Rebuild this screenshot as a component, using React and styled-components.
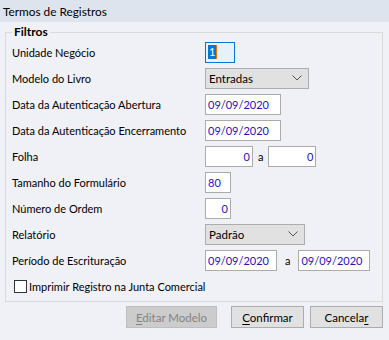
import React from 'react'
import styled, { createGlobalStyle } from 'styled-components'

const Global = createGlobalStyle`
  html, body {
    margin: 0;
    padding: 0;
    background: #f0f0f7;
  }
`

const Window = styled.div`
  width: 389px;
  height: 340px;
  background: #f0f0f7;
  font-family: Lato, "Liberation Sans", sans-serif;
  font-size: 11px;
  color: #000;
  display: flex;
  flex-direction: column;
  overflow: hidden;
`

const TitleBar = styled.div`
  height: 22px;
  flex: none;
  background: #dde4ee;
  padding-left: 3px;
  display: flex;
  align-items: center;
  font-size: 11.8px;
`

const Body = styled.div`
  padding: 3px 6px 0 5px;
  display: flex;
  flex-direction: column;
`

const Group = styled.fieldset`
  margin: 0;
  border: 1px solid #dadada;
  padding: 0 0 2px 6px;
  min-width: 0;
`

const Legend = styled.legend`
  font-weight: bold;
  font-size: 12px;
  padding: 0 2px;
  margin-left: 0;
  line-height: 14px;
`

const Grid = styled.div`
  display: grid;
  grid-template-columns: 193px auto;
  grid-auto-rows: 26px;
  align-items: center;
`

const Label = styled.div`
  white-space: nowrap;
`

const Field = styled.div`
  display: flex;
  align-items: center;
  gap: ${({ $gap }) => $gap || 0}px;
`

const Input = styled.div`
  box-sizing: border-box;
  width: ${({ $w }) => $w}px;
  height: 21px;
  background: #fff;
  border: 1px solid #ababab;
  color: #2a10c0;
  display: flex;
  align-items: center;
  justify-content: ${({ $right }) => ($right ? 'flex-end' : 'flex-start')};
  padding: 0 2px 0 2px;
  white-space: nowrap;
`

const FocusInput = styled(Input)`
  border-color: #0078d7;
  background: #e5f1fb;
`

const Selected = styled.span`
  background: #0078d7;
  color: #fff;
  line-height: 14px;
  padding: 0 1px;
`

const Caret = styled.span`
  display: inline-block;
  width: 1px;
  height: 14px;
  background: #f07000;
`

const Combo = styled.div`
  box-sizing: border-box;
  width: ${({ $w }) => $w}px;
  height: 21px;
  background: #e1e1e1;
  border: 1px solid #adadad;
  display: flex;
  align-items: center;
  justify-content: space-between;
  padding: 0 6px 0 3px;
  font-size: 11.5px;
`

const Sep = styled.span``

const CheckRow = styled.label`
  grid-column: 1 / span 2;
  display: flex;
  align-items: center;
  gap: 2px;
  padding-left: 2px;
  white-space: nowrap;
`

const Box = styled.span`
  box-sizing: border-box;
  width: 13px;
  height: 13px;
  border: 1px solid #333;
  background: #fff;
`

const Buttons = styled.div`
  display: flex;
  justify-content: flex-end;
  margin-top: 4px;
  gap: 6px;
`

const Button = styled.div`
  box-sizing: border-box;
  width: ${({ $w }) => $w}px;
  height: 22px;
  background: ${({ $disabled }) => ($disabled ? '#cccccc' : '#e1e1e1')};
  border: 1px solid ${({ $disabled }) => ($disabled ? '#bfbfbf' : '#adadad')};
  color: ${({ $disabled }) => ($disabled ? '#838383' : '#000')};
  display: flex;
  align-items: center;
  justify-content: center;
  font-size: 11.5px;
  margin-right: ${({ $mr }) => $mr || 0}px;

  u {
    text-decoration-thickness: 1px;
    text-underline-offset: 2px;
  }
`

const Chevron = () => (
  <svg width="10" height="6" viewBox="0 0 10 6">
    <path d="M0.5 0.5 L5 5 L9.5 0.5" fill="none" stroke="#555" strokeWidth="1" />
  </svg>
)

const App = () => (
  <Window>
    <Global />
    <TitleBar>Termos de Registros</TitleBar>
    <Body>
      <Group>
        <Legend>Filtros</Legend>
        <Grid>
          <Label>Unidade Negócio</Label>
          <Field>
            <FocusInput $w={30}>
              <Selected>1</Selected>
              <Caret />
            </FocusInput>
          </Field>

          <Label>Modelo do Livro</Label>
          <Field>
            <Combo $w={104}>
              Entradas
              <Chevron />
            </Combo>
          </Field>

          <Label>Data da Autenticação Abertura</Label>
          <Field>
            <Input $w={76}>09/09/2020</Input>
          </Field>

          <Label>Data da Autenticação Encerramento</Label>
          <Field>
            <Input $w={76}>09/09/2020</Input>
          </Field>

          <Label>Folha</Label>
          <Field $gap={5}>
            <Input $w={48} $right>0</Input>
            <Sep>a</Sep>
            <Input $w={48} $right>0</Input>
          </Field>

          <Label>Tamanho do Formulário</Label>
          <Field>
            <Input $w={26}>80</Input>
          </Field>

          <Label>Número de Ordem</Label>
          <Field>
            <Input $w={26} $right>0</Input>
          </Field>

          <Label>Relatório</Label>
          <Field>
            <Combo $w={100}>
              Padrão
              <Chevron />
            </Combo>
          </Field>

          <Label>Período de Escrituração</Label>
          <Field $gap={8}>
            <Input $w={72}>09/09/2020</Input>
            <Sep>a</Sep>
            <Input $w={72}>09/09/2020</Input>
          </Field>

          <CheckRow>
            <Box />
            Imprimir Registro na Junta Comercial
          </CheckRow>
        </Grid>
      </Group>
      <Buttons>
        <Button $w={91} $mr={8} $disabled>
          <span><u>E</u>ditar Modelo</span>
        </Button>
        <Button $w={73}>
          <span><u>C</u>onfirmar</span>
        </Button>
        <Button $w={73}>
          <span>Cancela<u>r</u></span>
        </Button>
      </Buttons>
    </Body>
  </Window>
)

export default App
